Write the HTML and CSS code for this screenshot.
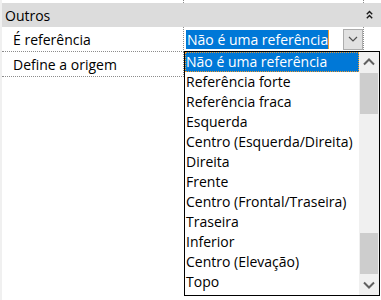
FILE: index.html
```html
<!DOCTYPE html>
<html lang="pt">
<head>
<meta charset="utf-8">
<title>Propriedades</title>
<link rel="stylesheet" href="styles.css">
</head>
<body>
<div class="grid">
  <div class="row top"><div class="name"></div><div class="value"></div><div class="rest"></div></div>
  <div class="cat">
    <span>Outros</span>
    <svg class="collapse" width="7" height="9" viewBox="0 0 7 9"><path d="M0.8 4.2 L3.5 1.5 L6.2 4.2 M0.8 8.2 L3.5 5.5 L6.2 8.2" fill="none" stroke="#1a1a1a" stroke-width="1.4"/></svg>
  </div>
  <div class="row prop">
    <div class="name">É referência</div>
    <div class="value">
      <span class="sel">Não é uma referência</span>
      <span class="dd"><svg width="10" height="6" viewBox="0 0 10 6"><path d="M1 1 L5 5 L9 1" fill="none" stroke="#505050" stroke-width="1.2"/></svg></span>
    </div>
    <div class="rest"></div>
  </div>
  <div class="row prop">
    <div class="name">Define a origem</div>
    <div class="value"></div>
    <div class="rest"></div>
  </div>
</div>
<div class="list">
  <ul class="items">
    <li class="on">Não é uma referência</li>
    <li>Referência forte</li>
    <li>Referência fraca</li>
    <li>Esquerda</li>
    <li>Centro (Esquerda/Direita)</li>
    <li>Direita</li>
    <li>Frente</li>
    <li>Centro (Frontal/Traseira)</li>
    <li>Traseira</li>
    <li>Inferior</li>
    <li>Centro (Elevação)</li>
    <li>Topo</li>
  </ul>
  <div class="sb">
    <div class="arrow"><svg width="12" height="8" viewBox="0 0 12 8"><path d="M1 6.5 L6 1.5 L11 6.5" fill="none" stroke="#606060" stroke-width="2"/></svg></div>
    <div class="track">
      <div class="thumb"></div>
      <div class="gap"></div>
      <div class="thumb"></div>
    </div>
    <div class="arrow"><svg width="12" height="8" viewBox="0 0 12 8"><path d="M1 1.5 L6 6.5 L11 1.5" fill="none" stroke="#606060" stroke-width="2"/></svg></div>
  </div>
</div>
</body>
</html>
```
FILE: styles.css
```css
* { box-sizing: border-box; margin: 0; padding: 0; }
body {
  margin: 0;
  width: 381px;
  height: 300px;
  overflow: hidden;
  position: relative;
  background: #fff;
  font-family: "Open Sans", "Noto Sans", sans-serif;
  font-size: 14px;
  color: #000;
}
.grid {
  display: flex;
  flex-direction: column;
  height: 300px;
  border-left: 2px solid #f0f0f0;
}
.row { display: flex; }
.row.top { height: 3px; }
.name {
  width: 182px;
  border-right: 1px dotted #8c8c8c;
  padding-left: 11px;
  white-space: nowrap;
  display: flex;
  align-items: center;
}
.value {
  width: 180px;
  border-right: 1px dotted #8c8c8c;
  display: flex;
  align-items: center;
  padding-left: 2px;
}
.rest { flex: 1; }
.cat {
  height: 24px;
  background: #dcdcdc;
  display: flex;
  align-items: center;
  justify-content: space-between;
  padding: 0 8px 0 3px;
}
.collapse { display: block; margin-top: -1px; }
.prop { height: 25px; }
.prop .name, .prop .value { border-bottom: 1px dotted #8c8c8c; }
.sel {
  background: #0078d7;
  color: #fff;
  height: 19px;
  line-height: 19px;
  padding-left: 1px;
  border-right: 1px solid #f09a2c;
  white-space: nowrap;
}
.dd {
  margin-left: auto;
  width: 20px;
  height: 21px;
  background: #e1e1e1;
  border: 1px solid #adadad;
  display: flex;
  align-items: center;
  justify-content: center;
}
.dd svg { display: block; }
.list {
  position: absolute;
  left: 184px;
  top: 51px;
  width: 196px;
  height: 245px;
  border: 1px solid #000;
  background: #fff;
  display: flex;
}
.items {
  list-style: none;
  flex: 1;
  padding-top: 0;
}
.items li {
  height: 20px;
  line-height: 20px;
  padding-left: 1px;
  white-space: nowrap;
  overflow: hidden;
}
.items li.on {
  background: #0078d7;
  color: #fff;
  outline: 1px dotted #f09a2c;
  outline-offset: -1px;
}
.sb {
  width: 20px;
  background: #f0f0f0;
  display: flex;
  flex-direction: column;
}
.arrow {
  height: 20px;
  display: flex;
  align-items: center;
  justify-content: center;
}
.arrow svg { display: block; }
.track {
  flex: 1;
  display: flex;
  flex-direction: column;
  padding: 1px 1px 1px 1px;
}
.thumb { height: 41px; background: #cdcdcd; }
.gap { flex: 1; }
```
